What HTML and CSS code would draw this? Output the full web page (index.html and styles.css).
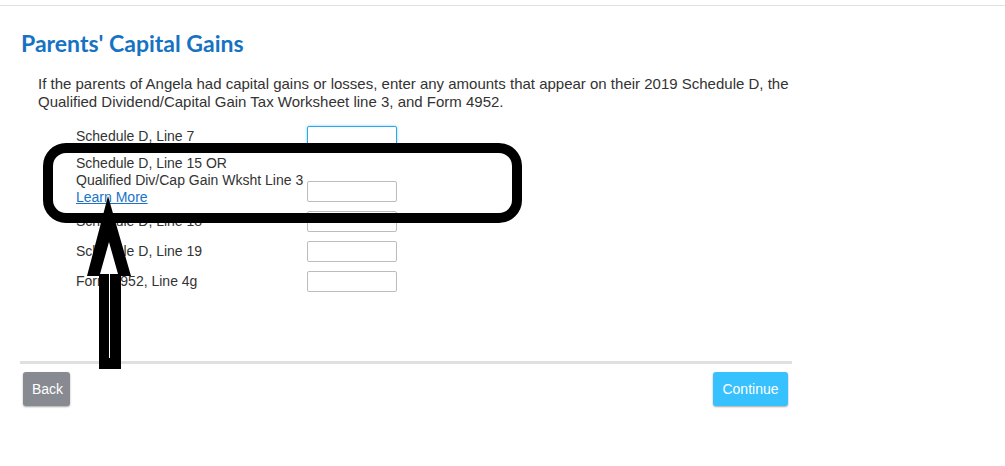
FILE: index.html
```html
<!DOCTYPE html>
<html lang="en">
<head>
<meta charset="utf-8">
<title>Parents' Capital Gains</title>
<link rel="stylesheet" href="styles.css">
</head>
<body>
<header class="topbar"></header>
<main class="page">
  <h1 class="title">Parents' Capital Gains</h1>
  <p class="intro">If the parents of Angela had capital gains or losses, enter any amounts that appear on their 2019 Schedule D, the Qualified Dividend/Capital Gain Tax Worksheet line 3, and Form 4952.</p>
  <div class="form">
    <div class="row">
      <label class="label">Schedule D, Line 7</label>
      <input class="field focused" type="text">
    </div>
    <div class="row row-tall">
      <div class="label label-multi">Schedule D, Line 15 OR<br>Qualified Div/Cap Gain Wksht Line 3<br><a class="link" href="#">Learn More</a></div>
      <input class="field field-end" type="text">
    </div>
    <div class="row">
      <label class="label">Schedule D, Line 18</label>
      <input class="field" type="text">
    </div>
    <div class="row">
      <label class="label">Schedule D, Line 19</label>
      <input class="field" type="text">
    </div>
    <div class="row">
      <label class="label">Form 4952, Line 4g</label>
      <input class="field" type="text">
    </div>
  </div>
  <hr class="rule">
  <div class="actions">
    <button class="btn btn-back" type="button">Back</button>
    <button class="btn btn-continue" type="button">Continue</button>
  </div>
</main>
<svg class="annot" width="1005" height="466" viewBox="0 0 1005 466" aria-hidden="true">
  <rect x="48" y="148" width="469" height="70" rx="18" ry="18" fill="none" stroke="#000" stroke-width="10"/>
  <polygon points="108,196 131,276 121,276 121,369 99,369 99,276 87,276" fill="#000"/>
  <polygon points="109,242 118,274 110,274 110,358 109,358 109,274 100,274" fill="#fff"/>
</svg>
</body>
</html>
```
FILE: styles.css
```css
html, body {
  margin: 0;
  padding: 0;
  background: #fff;
}

body {
  font-family: "Liberation Sans", Arial, sans-serif;
  font-size: 14px;
  color: #333;
  position: relative;
  width: 1005px;
  height: 466px;
  overflow: hidden;
}

.topbar {
  height: 5px;
  border-bottom: 1px solid #e2e2e2;
}

.page {
  margin-left: 20px;
  width: 772px;
}

.title {
  margin: 23px 0 0 1px;
  font-family: "Lato", "Open Sans", sans-serif;
  font-weight: 700;
  font-size: 23px;
  line-height: 28px;
  color: #1672c2;
}

.intro {
  margin: 18px 0 0 0;
  padding-left: 18px;
  font-size: 15px;
  line-height: 18px;
  color: #333;
}

.form {
  margin-top: 15px;
  padding-left: 56px;
  display: flex;
  flex-direction: column;
  gap: 9px;
}

.row {
  display: grid;
  grid-template-columns: 231px 90px;
  align-items: center;
}

.label {
  line-height: 17px;
  color: #333;
}

.label-multi {
  margin-top: -1px;
  margin-bottom: -4px;
}

.link {
  color: #1a73c8;
  text-decoration: underline;
}

.field {
  box-sizing: border-box;
  width: 90px;
  height: 21px;
  margin: 0;
  padding: 0 4px;
  border: 1px solid #bcbcbc;
  border-radius: 2px;
  background: #fff;
  font: inherit;
  outline: none;
}

.field.focused {
  border-color: #2aa7ea;
  box-shadow: 0 0 3px rgba(42, 167, 234, 0.55);
}

.field-end {
  align-self: end;
}

.rule {
  margin: 69px 0 8px 0;
  height: 3px;
  border: none;
  background: #e0e0e0;
}

.actions {
  display: flex;
  justify-content: space-between;
}

.btn {
  font-family: "Liberation Sans", Arial, sans-serif;
  font-size: 14px;
  line-height: 18px;
  color: #fff;
  border: none;
  border-radius: 3px;
  padding: 8px 9px;
  height: 34px;
  box-shadow: 0 1px 2px rgba(0, 0, 0, 0.35);
  cursor: pointer;
}

.btn-back {
  margin-left: 3px;
  width: 47px;
  background: #878a91;
}

.btn-continue {
  margin-right: 4px;
  width: 75px;
  background: #37c1fe;
}

.annot {
  position: absolute;
  top: 0;
  left: 0;
  pointer-events: none;
}
```
